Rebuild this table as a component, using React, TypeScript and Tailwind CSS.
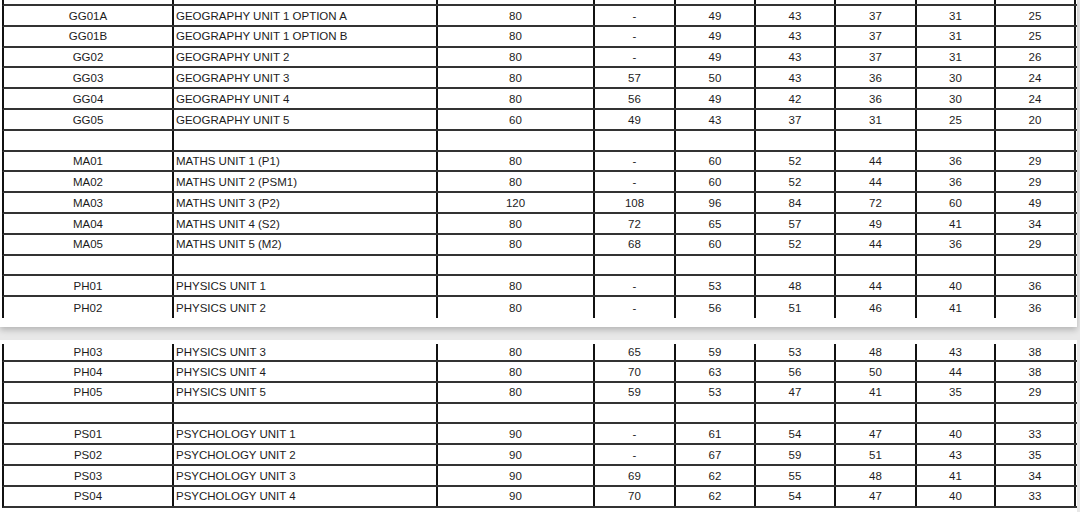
type Row = string[] | null

const pageOne: Row[] = [
  ['GG01A', 'GEOGRAPHY UNIT 1 OPTION A', '80', '-', '49', '43', '37', '31', '25'],
  ['GG01B', 'GEOGRAPHY UNIT 1 OPTION B', '80', '-', '49', '43', '37', '31', '25'],
  ['GG02', 'GEOGRAPHY UNIT 2', '80', '-', '49', '43', '37', '31', '26'],
  ['GG03', 'GEOGRAPHY UNIT 3', '80', '57', '50', '43', '36', '30', '24'],
  ['GG04', 'GEOGRAPHY UNIT 4', '80', '56', '49', '42', '36', '30', '24'],
  ['GG05', 'GEOGRAPHY UNIT 5', '60', '49', '43', '37', '31', '25', '20'],
  null,
  ['MA01', 'MATHS UNIT 1 (P1)', '80', '-', '60', '52', '44', '36', '29'],
  ['MA02', 'MATHS UNIT 2 (PSM1)', '80', '-', '60', '52', '44', '36', '29'],
  ['MA03', 'MATHS UNIT 3 (P2)', '120', '108', '96', '84', '72', '60', '49'],
  ['MA04', 'MATHS UNIT 4 (S2)', '80', '72', '65', '57', '49', '41', '34'],
  ['MA05', 'MATHS UNIT 5 (M2)', '80', '68', '60', '52', '44', '36', '29'],
  null,
  ['PH01', 'PHYSICS UNIT 1', '80', '-', '53', '48', '44', '40', '36'],
  ['PH02', 'PHYSICS UNIT 2', '80', '-', '56', '51', '46', '41', '36'],
]

const pageTwo: Row[] = [
  ['PH03', 'PHYSICS UNIT 3', '80', '65', '59', '53', '48', '43', '38'],
  ['PH04', 'PHYSICS UNIT 4', '80', '70', '63', '56', '50', '44', '38'],
  ['PH05', 'PHYSICS UNIT 5', '80', '59', '53', '47', '41', '35', '29'],
  null,
  ['PS01', 'PSYCHOLOGY UNIT 1', '90', '-', '61', '54', '47', '40', '33'],
  ['PS02', 'PSYCHOLOGY UNIT 2', '90', '-', '67', '59', '51', '43', '35'],
  ['PS03', 'PSYCHOLOGY UNIT 3', '90', '69', '62', '55', '48', '41', '34'],
  ['PS04', 'PSYCHOLOGY UNIT 4', '90', '70', '62', '54', '47', '40', '33'],
]

// widths include the 2px right rule of each cell
const cols = [
  'w-[170px] justify-center',
  'w-[264px] justify-start pl-[2px]',
  'w-[157px] justify-center',
  'w-[81px] justify-center',
  'w-[80px] justify-center',
  'w-[80px] justify-center',
  'w-[81px] justify-center',
  'w-[79px] justify-center',
  'w-[80px] justify-center',
]

function TableRow({ row, height, last }: { row: Row; height: string; last?: boolean }) {
  return (
    <div
      className={`flex border-l-2 border-l-[#111] ${height} ${
        last ? '' : 'border-b-2 border-b-[#333]'
      }`}
    >
      {cols.map((c, i) => (
        <div
          key={i}
          className={`flex items-center pt-[2px] shrink-0 border-r-2 border-r-[#111] overflow-hidden whitespace-nowrap ${c}`}
        >
          {row ? row[i] : ''}
        </div>
      ))}
    </div>
  )
}

export default function App() {
  return (
    <div
      className="w-[1080px] h-[512px] overflow-hidden bg-[#e8e8e8] text-[11.5px] leading-none text-[#1c1c1c]"
      style={{ fontFamily: '"Liberation Sans", Arial, sans-serif' }}
    >
      <div className="relative z-10 w-[1077px] h-[327px] bg-white pl-[2px] shadow-[0_3px_6px_rgba(0,0,0,0.22)]">
        <TableRow row={null} height="h-[6px]" />
        {pageOne.map((r, i) => (
          <TableRow key={i} row={r} height="h-[20.8px]" last={i === pageOne.length - 1} />
        ))}
      </div>
      <div className="mt-[13px] w-[1077px] h-[172px] bg-white pl-[2px] pt-[4px]">
        {pageTwo.map((r, i) => (
          <TableRow key={i} row={r} height={i === 0 ? 'h-[18px]' : 'h-[20.8px]'} />
        ))}
      </div>
    </div>
  )
}
